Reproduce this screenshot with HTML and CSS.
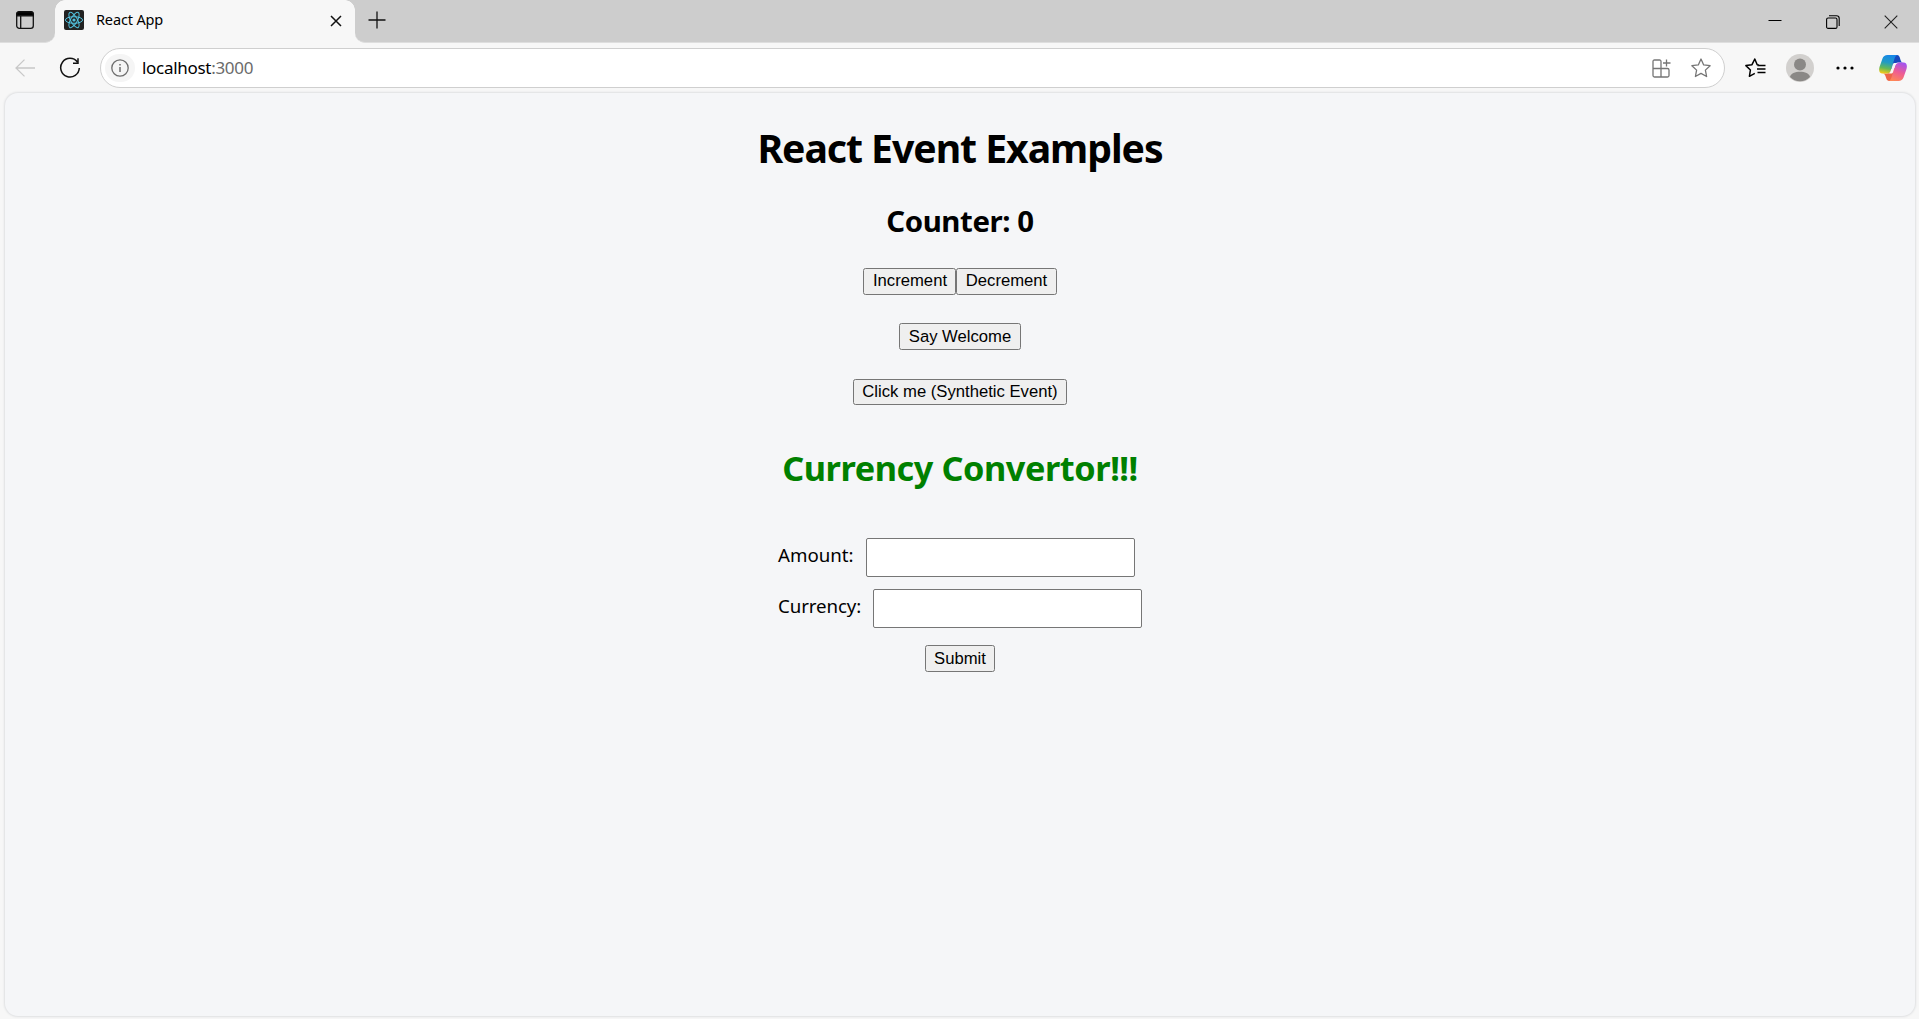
FILE: index.html
```html
<!DOCTYPE html>
<html lang="en">
<head>
<meta charset="utf-8">
<title>React App</title>
<link rel="stylesheet" href="styles.css">
</head>
<body>
<header class="tabbar">
  <div class="workspace">
    <svg width="18" height="18" viewBox="0 0 18 18" fill="none" stroke="#111" stroke-width="1.3"><rect x=".7" y=".7" width="16.6" height="16.6" rx="2.6"/><path d="M.8 4.8V3A2.2 2.2 0 0 1 3 .8h12A2.2 2.2 0 0 1 17.200 3v1.800z" fill="#000"/><path d="M4.700 5v12"/></svg>
  </div>
  <div class="tab">
    <svg class="favicon" width="20" height="20" viewBox="0 0 20 20" fill="none" stroke="#53c1de" stroke-width="1"><rect width="20" height="20" rx="2" fill="#222" stroke="none"/><ellipse cx="10" cy="10" rx="8.600" ry="3.300"/><ellipse cx="10" cy="10" rx="8.600" ry="3.300" transform="rotate(60 10 10)"/><ellipse cx="10" cy="10" rx="8.600" ry="3.300" transform="rotate(120 10 10)"/><circle cx="10" cy="10" r="1.600" fill="#53c1de" stroke="none"/></svg>
    <span class="tab-title">React App</span>
    <svg class="tab-close" width="12" height="12" viewBox="0 0 12 12" stroke="#111" stroke-width="1.500"><path d="M1 1l10 10M11 1L1 11"/></svg>
  </div>
  <svg class="new-tab" width="18" height="18" viewBox="0 0 18 18" stroke="#111" stroke-width="1.300"><path d="M9 .5v17M.5 9h17"/></svg>
  <div class="window-controls">
    <svg width="14" height="14" viewBox="0 0 14 14" stroke="#000"><path d="M.5 5.500h13"/></svg>
    <svg width="14" height="14" viewBox="0 0 14 14" fill="none" stroke="#000" stroke-width="1.100"><rect x=".6" y="3" width="10.400" height="10.400" rx="1.500"/><path d="M3 .8h7.500a2.700 2.700 0 0 1 2.700 2.700V11"/></svg>
    <svg width="14" height="14" viewBox="0 0 14 14" stroke="#222" stroke-width="1.100"><path d="M.7.700l12.600 12.600M13.300.700L.7 13.300"/></svg>
  </div>
</header>
<nav class="toolbar">
  <svg class="back" width="20" height="18" viewBox="0 0 20 18" fill="none" stroke="#c8c8c8" stroke-width="1.300"><path d="M20 9H1M9.500.600L1 9l8.500 8.400"/></svg>
  <svg class="reload" width="22" height="22" viewBox="0 0 22 22" fill="none" stroke="#111" stroke-width="1.500"><path d="M18.400 5A9.300 9.300 0 1 0 20.300 11M19 1.300V6.200H14"/></svg>
  <div class="address">
    <span class="info"><svg width="18" height="18" viewBox="0 0 18 18" fill="none" stroke="#6e6e6e" stroke-width="1.300"><circle cx="9" cy="9" r="8.200"/><path d="M9 8v5M9 5v1.600" stroke-width="1.500"/></svg></span>
    <span class="url">localhost<span class="port">:3000</span></span>
    <svg class="apps" width="19" height="19" viewBox="0 0 19 19" fill="none" stroke="#757575" stroke-width="1.300"><path d="M9 9.500V2.500Q9 1 7.500 1H2.500Q1 1 1 2.500v14Q1 18 2.500 18H15.500Q17 18 17 16.500V11Q17 9.500 15.500 9.500H1M9 9.500V18M14.500.500v7M11 4h7.500"/></svg>
    <svg class="star" width="20" height="20" viewBox="0 0 20 20" fill="none" stroke="#757575" stroke-width="1.300" stroke-linejoin="round"><path d="M10 1l2.700 5.900 6.400.800-4.700 4.400 1.200 6.400L10 15.400l-5.600 3.100 1.200-6.400L.9 7.700l6.400-.8z"/></svg>
  </div>
  <svg class="favorites" width="21" height="20" viewBox="0 0 21 20" fill="none" stroke="#000" stroke-width="1.500" stroke-linejoin="round"><path d="M14 6.900l-1.800-.2L9.800 1 7 6.700.9 7.600l4.500 4.400-1 6.300 5.400-2.900M12.500 7.600h8M12 11h8.500M12.500 14.500h8"/></svg>
  <svg class="avatar" width="28" height="28" viewBox="0 0 28 28"><circle cx="14" cy="14" r="14" fill="#d2d0ce"/><circle cx="14" cy="10.500" r="6" fill="#8a8886"/><path d="M4 23c1-7 19-7 20 0a14 14 0 0 1-20 0z" fill="#8a8886"/></svg>
  <svg class="more" width="18" height="4" viewBox="0 0 18 4"><circle cx="2" cy="2" r="1.600"/><circle cx="9" cy="2" r="1.600"/><circle cx="16" cy="2" r="1.600"/></svg>
  <svg class="copilot" width="28" height="26" viewBox="0 0 28 26">
    <defs>
      <linearGradient id="cool" x1=".5" y1="0" x2=".3" y2="1"><stop offset="0" stop-color="#1687e8"/><stop offset=".4" stop-color="#219bc4"/><stop offset=".72" stop-color="#64b957"/><stop offset="1" stop-color="#f4c917"/></linearGradient>
      <linearGradient id="warm" x1=".7" y1="0" x2=".3" y2="1"><stop offset="0" stop-color="#a454ef"/><stop offset=".5" stop-color="#ee5c94"/><stop offset="1" stop-color="#ff8855"/></linearGradient>
    </defs>
    <path d="M15 0h3c2 0 2.700 2 3.300 4.200.5 2 1.200 3.300 3.200 3.300H19c-2 0-3 1-3.700 3L14 14h-3z" fill="#1749bd"/>
    <path d="M13 26h-3c-2 0-2.700-2-3.300-4.200-.5-2-1.200-3.300-3.200-3.300H8c2 0 3-.9 3.700-2.500L14 13h3z" fill="#ed6548"/>
    <path d="M8.500 0H19c-2 0-2.900 1.700-3.700 4.300L12 15c-.800 2.600-2 3.500-4 3.500H3.500C.5 18.500-.5 16 .5 12L3.500 3.500C4.300 1.200 6 0 8.500 0z" fill="url(#cool)"/>
    <path d="M19.500 26H9c2 0 2.900-1.700 3.700-4.300L16 11c.800-2.600 2-3.500 4-3.500h4.500c3 0 4 2.500 3 6.500l-3 8.500c-.800 2.300-2.500 3.500-5 3.500z" fill="url(#warm)"/>
    <path d="M15.300 8h4.200c-2 0-3 1.200-3.700 3.500l-1.700 5.400c-.4 1.100-1.100 1.600-2.500 1.600H8.800c1.900-.2 2.700-1.500 3.300-3.500l1.500-5c.4-1.300.9-2 1.700-2z" fill="#f7f7f7"/>
  </svg>
</nav>
<main class="page">
  <h1 class="title">React Event Examples</h1>
  <h2 class="counter">Counter: 0</h2>
  <div class="row counter-buttons"><button class="btn increment">Increment</button><button class="btn decrement">Decrement</button></div>
  <div class="row"><button class="btn welcome">Say Welcome</button></div>
  <div class="row"><button class="btn synthetic">Click me (Synthetic Event)</button></div>
  <h1 class="converter-title">Currency Convertor!!!</h1>
  <form class="converter">
    <div class="field"><label class="label amount" for="amount">Amount:</label><input class="input" id="amount" type="text"></div>
    <div class="field"><label class="label currency" for="currency">Currency:</label><input class="input" id="currency" type="text"></div>
    <button class="btn submit" type="button">Submit</button>
  </form>
</main>
</body>
</html>
```
FILE: styles.css
```css
* { box-sizing: border-box; }
body {
  margin: 0;
  height: 1019px;
  display: flex;
  flex-direction: column;
  overflow: hidden;
  background: #f7f7f7;
  color: #000;
  font-family: "Segoe UI", "Noto Sans", sans-serif;
}
svg { display: block; flex: none; }

.tabbar {
  display: flex;
  height: 43px;
  background: #f7f7f7;
}
.workspace {
  width: 55px;
  padding: 11px 0 0 16px;
  background: #cdcdcd;
  border-bottom: 1px solid #dedede;
  border-bottom-right-radius: 10px;
}
.tab {
  display: flex;
  align-items: center;
  width: 300px;
  height: 40px;
  padding: 0 13px 0 9px;
  background: #f7f7f7;
  position: relative;
}
.tab::before, .tab::after {
  content: "";
  position: absolute;
  top: 0;
  width: 10px;
  height: 10px;
}
.tab::before { left: 0; background: radial-gradient(circle at 100% 100%, #f7f7f7 9.500px, #cdcdcd 10px); }
.tab::after { right: 0; background: radial-gradient(circle at 0 100%, #f7f7f7 9.500px, #cdcdcd 10px); }
.tab-title {
  margin: 0 0 2px 12px;
  font-size: 14.500px;
  letter-spacing: -0.15px;
  white-space: nowrap;
}
.tab-close { margin: 1px 0 0 auto; }
.new-tab {
  width: 46px;
  height: 43px;
  padding: 11px 15px 13px 13px;
  background: #cdcdcd;
  border-bottom: 1px solid #dedede;
  border-bottom-left-radius: 10px;
}
.window-controls {
  flex: 1;
  display: flex;
  justify-content: flex-end;
  gap: 44px;
  padding: 15px 21px 0 0;
  background: #cdcdcd;
  border-bottom: 1px solid #dedede;
}

.toolbar {
  display: flex;
  align-items: center;
  height: 50px;
  padding: 0 12px 0 15px;
}
.reload { margin-left: 24px; }
.address {
  display: flex;
  flex-shrink: 0;
  align-items: center;
  width: 1625px;
  height: 40px;
  margin-left: 19px;
  padding: 0 13px 0 4px;
  border: 1px solid #cfcfcf;
  border-radius: 20px;
  background: #fff;
}
.info {
  display: flex;
  align-items: center;
  justify-content: center;
  width: 30px;
  height: 28px;
  border-radius: 14px;
  background: #f5f5f5;
}
.url { margin: 0 0 2px 7px; font-size: 17px; letter-spacing: -0.3px; }
.port { color: #6b6b6b; }
.apps { margin-left: auto; }
.star { margin-left: 20px; }
.favorites { margin-left: 20px; }
.avatar { margin-left: 20px; }
.more { margin-left: 22px; }
.copilot { margin-left: 25px; }

.page {
  display: flex;
  flex-direction: column;
  align-items: center;
  width: 1910px;
  height: 923px;
  margin-left: 5px;
  border-radius: 13px;
  background: #f5f6f8;
  box-shadow: 0 0 2px 1px #dfe0e2;
}
.title, .counter, .converter-title {
  margin: 0;
  font-weight: 700;
  white-space: nowrap;
}
.title { margin-top: 28px; font-size: 39.200px; line-height: 53px; letter-spacing: -1.05px; }
.counter { margin-top: 27px; font-size: 29.400px; line-height: 40px; letter-spacing: -0.4px; }
.row { display: flex; height: 27px; margin-bottom: 28px; }
.counter-buttons { margin-top: 27px; }
.btn {
  height: 27px;
  padding: 0 0 2px;
  border: 1px solid #767676;
  border-radius: 2.500px;
  background: #efefef;
  color: #000;
  font: 16.667px/23px "Liberation Sans", Arial, sans-serif;
  white-space: nowrap;
}
.increment { width: 93px; padding-left: 1px; }
.decrement { width: 101px; }
.welcome { width: 122px; padding-bottom: 0; }
.synthetic { width: 214px; height: 26px; margin-top: 1px; }
.submit { width: 70px; margin-top: 5px; padding-bottom: 1px; align-self: center; }
.converter-title {
  margin-top: 11px;
  color: #008000;
  font-size: 34.300px;
  line-height: 47px;
  letter-spacing: -0.45px;
}
.converter {
  display: flex;
  flex-direction: column;
  gap: 10px;
  width: 364px;
  margin-top: 47px;
}
.field { display: flex; align-items: flex-start; gap: 12px; height: 41px; }
.label { font-size: 18.700px; line-height: 33px; white-space: nowrap; }
.amount { width: 76px; }
.currency { width: 83px; letter-spacing: -0.1px; }
.input {
  width: 269px;
  height: 39px;
  padding: 0 8px;
  border: 1px solid #767676;
  border-radius: 2px;
  background: #fff;
}
```
